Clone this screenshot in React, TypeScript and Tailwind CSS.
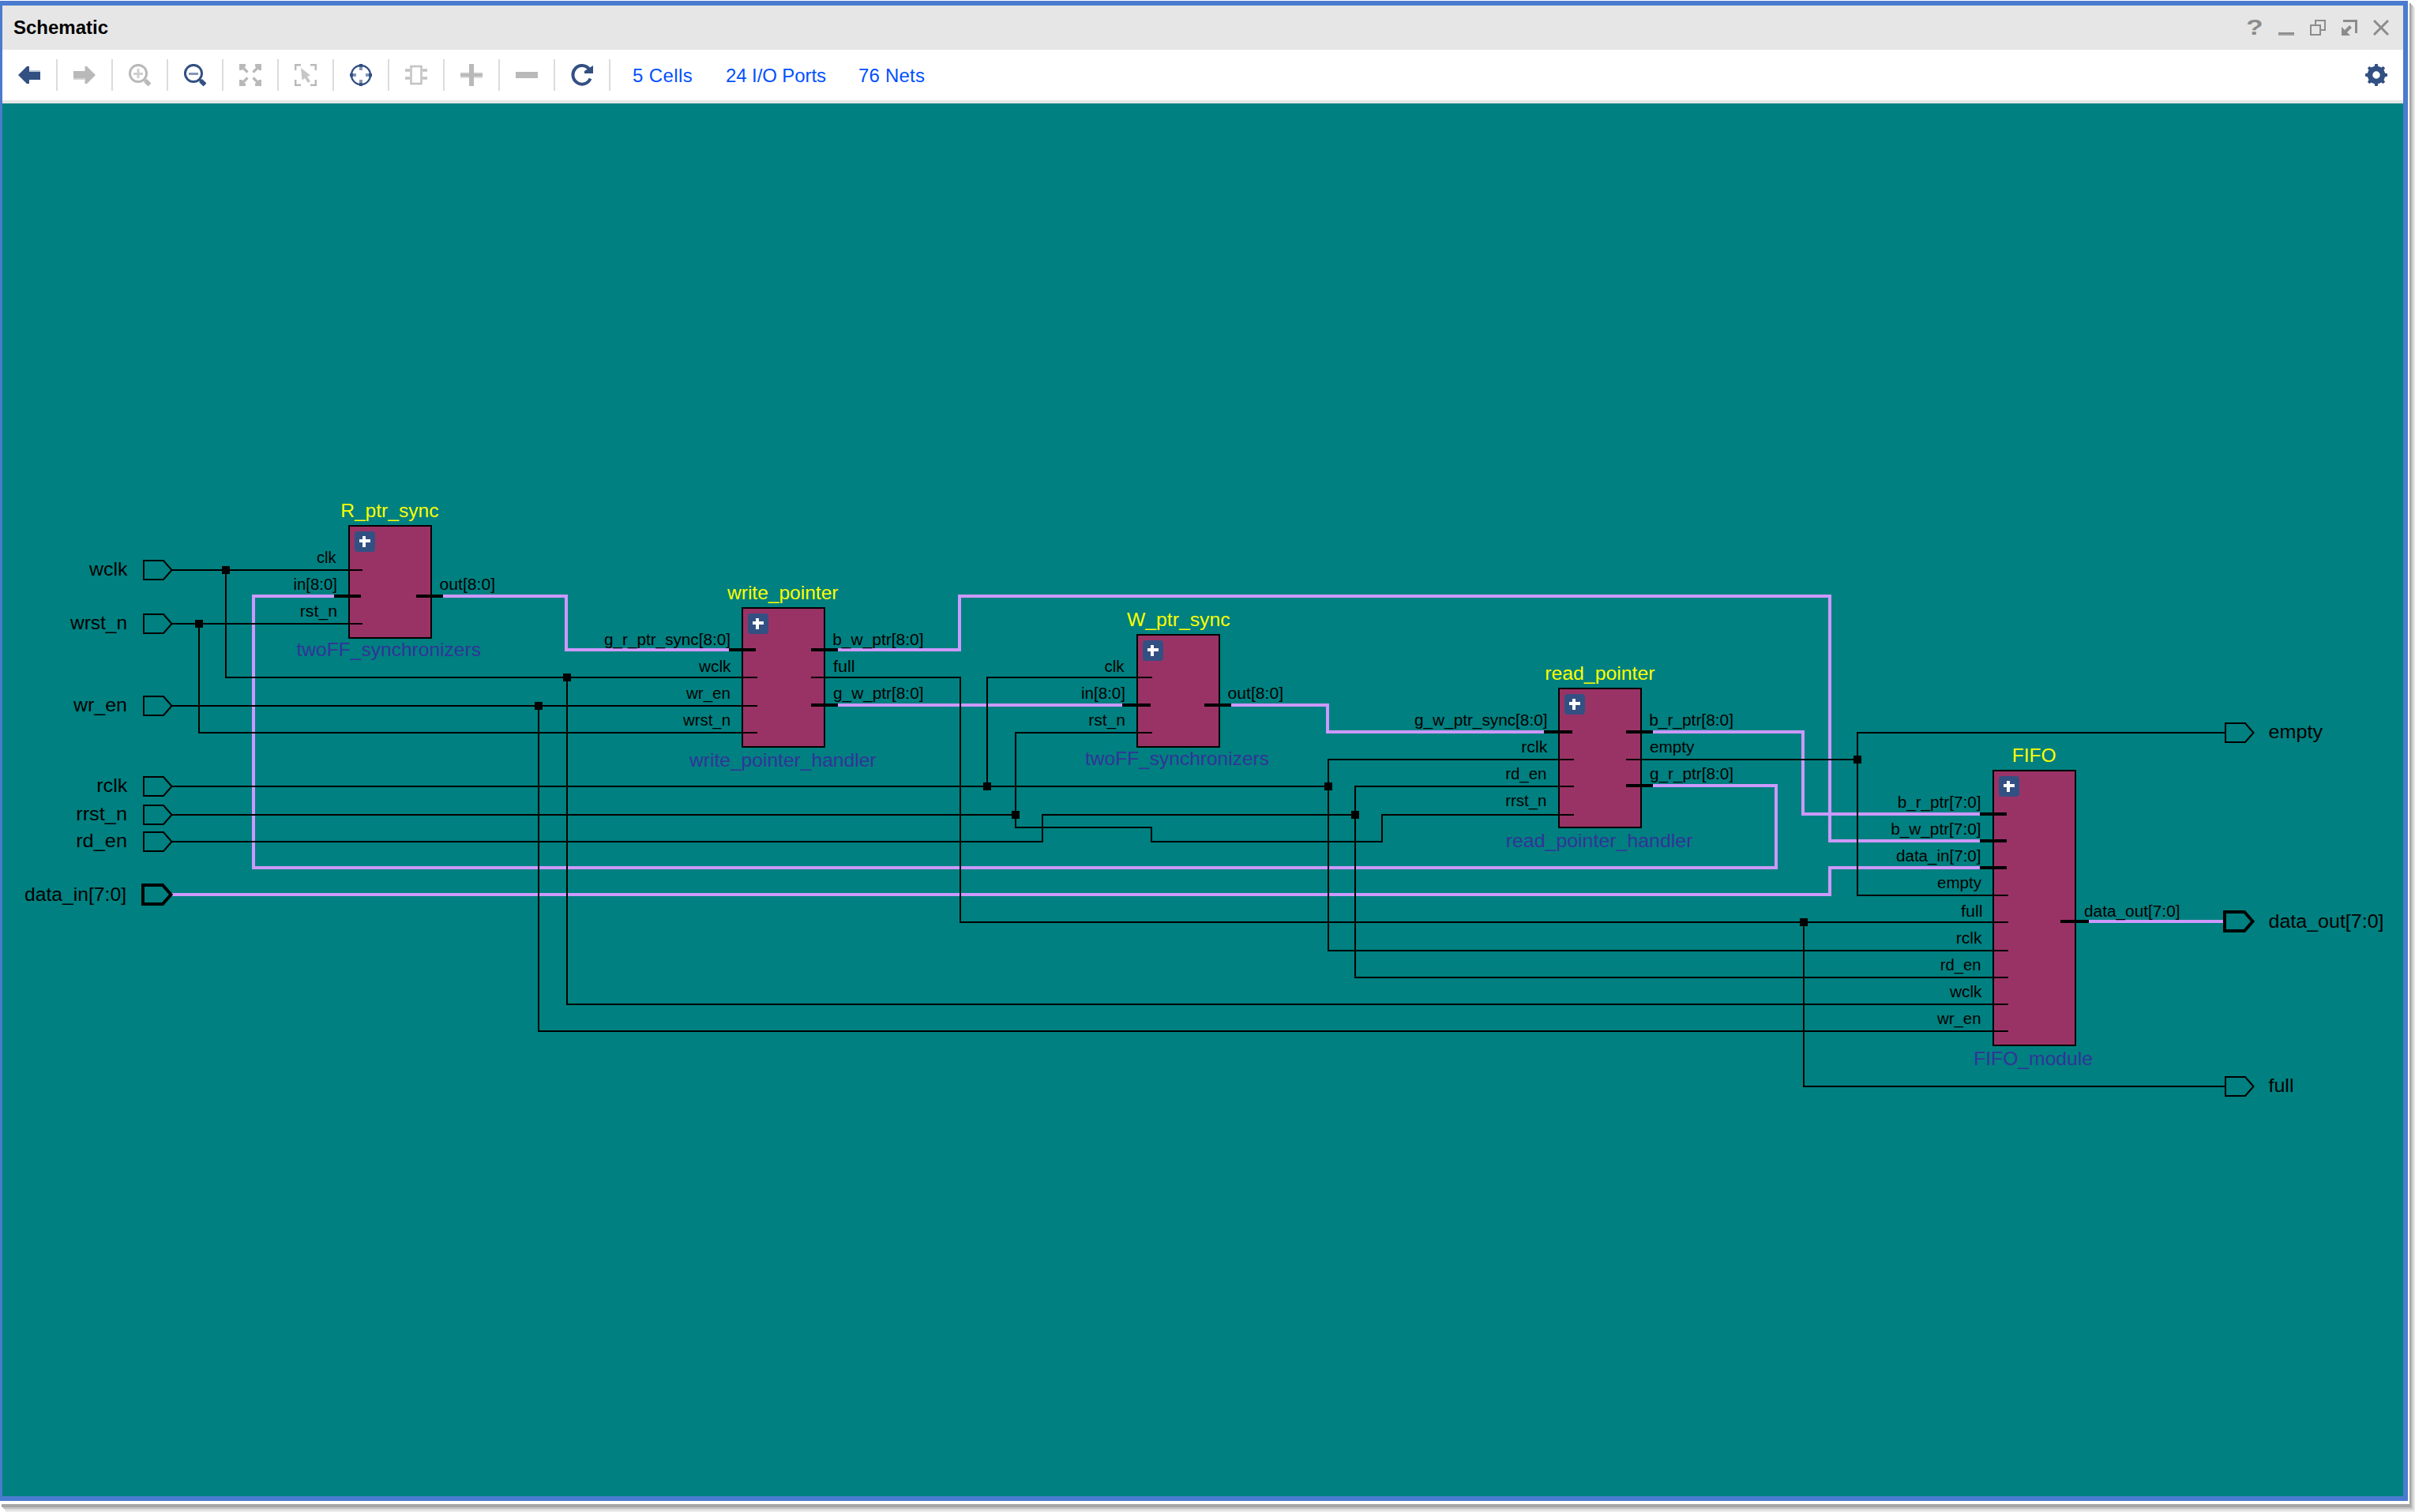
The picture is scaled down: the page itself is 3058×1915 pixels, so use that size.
import React from "react";

const FONT = "font-['Liberation_Sans',Arial,sans-serif]";
const BLUE = "#335083";
const GRAY = "#b9b9b9";

type Pt = [number, number];

/* ---------- toolbar icons, drawn on a 28px grid ---------- */

function Icon({ children }: { children: React.ReactNode }) {
  return (
    <svg width="28" height="28" viewBox="0 0 28 28" fill="none" className="block shrink-0">
      {children}
    </svg>
  );
}

const BackIcon = () => (
  <Icon>
    <path d="M0 14 L11 3 H14 V9 H28 V20 H14 V25 H11 Z" fill={BLUE} />
    <rect x="14" y="8" width="14" height="2" fill="#bcc6d8" />
  </Icon>
);

const ForwardIcon = () => (
  <Icon>
    <path d="M28 14 L17 3 H14.500 V9 H0 V18 H14.500 V25 H17 Z" fill={GRAY} />
    <rect x="0" y="18" width="15" height="2" fill="#d4d4d4" />
  </Icon>
);

const ZoomIcon = ({ color, soft, plus }: { color: string; soft: string; plus?: boolean }) => (
  <Icon>
    <circle cx="12" cy="12" r="10.6" stroke={color} strokeWidth="3" />
    <path d="M19 19 L22 22" stroke={color} strokeWidth="3" />
    <path d="M21 21 L26.500 26.500" stroke={color} strokeWidth="5.500" />
    <path d="M6 12.500 H18" stroke={soft} strokeWidth="3" />
    {plus && <path d="M12 6 V18" stroke={soft} strokeWidth="3" />}
  </Icon>
);

const FitIcon = () => (
  <Icon>
    <path d="M0 0 H8 V3 L3 8 H0 Z M28 0 V8 H25 L20 3 V0 Z M0 28 V20 H3 L8 25 V28 Z M28 28 H20 V25 L25 20 H28 Z" fill={GRAY} />
    <path d="M4 4 L10.500 10.500 M24 4 L17.500 10.500 M4 24 L10.500 17.500 M24 24 L17.500 17.500" stroke={GRAY} strokeWidth="3.200" />
  </Icon>
);

const SelectAreaIcon = () => (
  <Icon>
    <path d="M1.200 8 V1.200 H8 M20 1.200 H26.800 V8 M1.200 20 V26.800 H8 M20 26.800 H26.800 V20" stroke={GRAY} strokeWidth="2.400" />
    <path d="M8 5 L20 14.500 L16 16 L20 22 L17 24 L13 18 L9.500 20.500 Z" fill="#c6c6c6" />
  </Icon>
);

const TargetIcon = () => (
  <Icon>
    <circle cx="14" cy="14" r="12" stroke={BLUE} strokeWidth="2.400" />
    <path d="M14 1 V8 M14 20 V27 M1 14 H8 M20 14 H27" stroke="#8496b8" strokeWidth="4" />
    <path d="M14 0 V4 M14 24 V28 M0 14 H4 M24 14 H28" stroke={BLUE} strokeWidth="4" />
  </Icon>
);

const ChipIcon = () => (
  <Icon>
    <rect x="7.500" y="3" width="13" height="22" stroke="#c4c4c4" strokeWidth="2.600" />
    <path d="M0 8 H6 M0 18 H6 M22 8 H28 M22 18 H28" stroke="#c2c2c2" strokeWidth="3.600" />
  </Icon>
);

const PlusIcon = () => (
  <Icon>
    <rect x="0" y="10.500" width="28" height="7.500" fill="#dedede" />
    <rect x="0" y="12" width="28" height="4" fill={GRAY} />
    <rect x="11" y="0" width="6" height="28" fill={GRAY} />
  </Icon>
);

const MinusIcon = () => (
  <Icon>
    <rect x="0" y="10" width="28" height="8" fill={GRAY} />
  </Icon>
);

const RefreshIcon = () => (
  <Icon>
    <path d="M24.500 18.500 A11.500 11.800 0 1 1 23 6.500" stroke={BLUE} strokeWidth="4" />
    <path d="M28 2 V12 H17 V9 Z" fill={BLUE} />
  </Icon>
);

const GearIcon = () => (
  <Icon>
    <circle cx="14" cy="14" r="8" stroke={BLUE} strokeWidth="6.500" />
    {[0, 45, 90, 135].map((a) => (
      <g key={a} transform={`rotate(${a} 14 14)`}>
        <path d="M11.300 5 L12.300 0 H15.700 L16.700 5 Z M11.300 23 L12.300 28 H15.700 L16.700 23 Z" fill={BLUE} />
      </g>
    ))}
  </Icon>
);

/* ---------- title bar ---------- */

function TitleBar() {
  return (
    <div className="flex h-[56px] shrink-0 items-center justify-between bg-[#e6e6e6] pl-[14px] pr-[18px]">
      <span className="text-[24px] leading-[28px] font-bold text-black">Schematic</span>
      <div className="flex items-center gap-5 text-[#8c8c8c]">
        <span className="block w-5 scale-x-125 text-center text-[28px] leading-5 font-bold">?</span>
        <svg width="20" height="20" className="block">
          <rect x="0" y="16" width="20" height="4" fill="#a2a2a2" />
          <rect x="0" y="16" width="20" height="2" fill="#8c8c8c" />
        </svg>
        <svg width="20" height="20" fill="none" stroke="currentColor" strokeWidth="2" className="block">
          <rect x="1" y="7" width="12" height="12" />
          <path d="M7 7 V1 H19 V13 H13" />
        </svg>
        <svg width="20" height="20" fill="none" stroke="currentColor" className="block">
          <path d="M2 1.500 H18.500 V17" strokeWidth="3" />
          <path d="M4 16 L11.500 8.500" strokeWidth="4" />
          <path d="M0 9 V20 H11 Z" fill="currentColor" stroke="none" />
        </svg>
        <svg width="20" height="20" fill="none" stroke="currentColor" strokeWidth="3" className="block">
          <path d="M1 1 L19 19 M19 1 L1 19" />
        </svg>
      </div>
    </div>
  );
}

/* ---------- toolbar ---------- */

const tools = [
  BackIcon,
  ForwardIcon,
  () => <ZoomIcon color={GRAY} soft="#cfcfcf" plus />,
  () => <ZoomIcon color={BLUE} soft="#8496b8" />,
  FitIcon,
  SelectAreaIcon,
  TargetIcon,
  ChipIcon,
  PlusIcon,
  MinusIcon,
  RefreshIcon,
];

function Toolbar() {
  return (
    <div className="flex h-[68px] shrink-0 items-center justify-between border-b-4 border-[#e6e6e6] bg-white pr-5">
      <div className="flex items-center">
        {tools.map((Tool, i) => (
          <div key={i} className="flex h-10 w-[70px] items-center justify-center border-r-2 border-[#dcdcdc]">
            <Tool />
          </div>
        ))}
        <div className="flex gap-[40px] pt-[2px] pl-[28px] text-[24px] leading-[28px] whitespace-nowrap text-[#0050ff]">
          <span className="w-[78px] tracking-[0.4px]">5 Cells</span>
          <span className="w-[128px] tracking-[-0.100px]">24 I/O Ports</span>
          <span className="w-[90px] tracking-[0.2px]">76 Nets</span>
        </div>
      </div>
      <GearIcon />
    </div>
  );
}

/* ---------- schematic ---------- */

interface Label {
  t: string;
  x1: number;
  x2: number;
  y: number;
}

const L = (t: string, x1: number, x2: number, y: number): Label => ({ t, x1, x2, y });

const buses: Pt[][] = [
  [[423, 755], [321, 755], [321, 1099], [2249, 1099], [2249, 995], [2093, 995]],
  [[561, 755], [717, 755], [717, 823], [923, 823]],
  [[1061, 823], [1215, 823], [1215, 755], [2317, 755], [2317, 1065], [2507, 1065]],
  [[1061, 893], [1421, 893]],
  [[1559, 893], [1681, 893], [1681, 927], [1955, 927]],
  [[2093, 927], [2283, 927], [2283, 1031], [2507, 1031]],
  [[216, 1133], [2317, 1133], [2317, 1099], [2507, 1099]],
  [[2645, 1167], [2817, 1167]],
];

const wires: Pt[][] = [
  [[218, 722], [459, 722]],
  [[286, 722], [286, 858], [959, 858]],
  [[218, 790], [459, 790]],
  [[252, 790], [252, 928], [959, 928]],
  [[218, 894], [959, 894]],
  [[718, 858], [718, 1272], [2543, 1272]],
  [[682, 894], [682, 1306], [2543, 1306]],
  [[218, 996], [1682, 996]],
  [[1459, 858], [1250, 858], [1250, 996]],
  [[1993, 962], [1682, 962], [1682, 1204], [2543, 1204]],
  [[218, 1032], [1286, 1032]],
  [[1459, 928], [1286, 928], [1286, 1048], [1458, 1048], [1458, 1066], [1750, 1066], [1750, 1032], [1993, 1032]],
  [[218, 1066], [1320, 1066], [1320, 1032], [1716, 1032]],
  [[1993, 996], [1716, 996], [1716, 1238], [2543, 1238]],
  [[1027, 858], [1216, 858], [1216, 1168], [2543, 1168]],
  [[2059, 962], [2352, 962]],
  [[2817, 928], [2352, 928], [2352, 1134], [2543, 1134]],
  [[2284, 1168], [2284, 1376], [2817, 1376]],
];

const junctions: Pt[] = [
  [286, 722], [252, 790], [718, 858], [682, 894], [1250, 996], [1286, 1032],
  [1682, 996], [1716, 1032], [2352, 962], [2284, 1168],
];

const blocks = [
  { x: 441, y: 665, h: 144 },
  { x: 939, y: 769, h: 178 },
  { x: 1439, y: 803, h: 144 },
  { x: 1973, y: 871, h: 178 },
  { x: 2523, y: 975, h: 350 },
];

const stubs: [number, number, number][] = [
  [423, 457, 755], [527, 561, 755],
  [923, 957, 823], [1027, 1061, 823], [1027, 1061, 893],
  [1421, 1457, 893], [1525, 1559, 893],
  [1955, 1991, 927], [2059, 2093, 927], [2059, 2093, 995],
  [2507, 2541, 1031], [2507, 2541, 1065], [2507, 2541, 1099], [2609, 2645, 1167],
];

const ports: [number, number, boolean][] = [
  [182, 722, false], [182, 790, false], [182, 894, false], [182, 996, false],
  [182, 1032, false], [182, 1066, false], [181, 1133, true],
  [2818, 928, false], [2817, 1167, true], [2818, 1376, false],
];

const names: Label[] = [
  L("R_ptr_sync", 432, 555, 655),
  L("write_pointer", 921, 1061, 759),
  L("W_ptr_sync", 1427, 1557, 793),
  L("read_pointer", 1957, 2095, 861),
  L("FIFO", 2548.5, 2603, 965),
];

const modules: Label[] = [
  L("twoFF_synchronizers", 375.5, 608.5, 831),
  L("write_pointer_handler", 873, 1109, 971),
  L("twoFF_synchronizers", 1374, 1606.5, 969),
  L("read_pointer_handler", 1907.5, 2143, 1073),
  L("FIFO_module", 2500, 2649.5, 1349),
];

const portLabels: Label[] = [
  L("wclk", 113, 161, 729),
  L("wrst_n", 89, 159.5, 797),
  L("wr_en", 93, 159.5, 901),
  L("rclk", 123, 161, 1003),
  L("rrst_n", 97, 159.5, 1039),
  L("rd_en", 97, 159.5, 1073),
  L("data_in[7:0]", 31, 158.5, 1141),
  L("empty", 2872.5, 2940.5, 935),
  L("data_out[7:0]", 2872.5, 3017, 1175),
  L("full", 2872.5, 2903, 1383),
];

const pinLabels: Label[] = [
  L("clk", 401, 425, 713),
  L("in[8:0]", 371.5, 425.5, 747),
  L("rst_n", 380.5, 425.5, 781),
  L("out[8:0]", 556.5, 625.5, 747),
  L("g_r_ptr_sync[8:0]", 765, 923.5, 817),
  L("wclk", 885, 925, 851),
  L("wr_en", 869, 923.5, 885),
  L("wrst_n", 865, 923.5, 919),
  L("b_w_ptr[8:0]", 1055, 1168, 817),
  L("full", 1055, 1081, 851),
  L("g_w_ptr[8:0]", 1055, 1168, 885),
  L("clk", 1398.5, 1423, 851),
  L("in[8:0]", 1369, 1423.5, 885),
  L("rst_n", 1379, 1423.5, 919),
  L("out[8:0]", 1554.5, 1623.5, 885),
  L("g_w_ptr_sync[8:0]", 1791, 1958, 919),
  L("rclk", 1927, 1959, 953),
  L("rd_en", 1907, 1957, 987),
  L("rrst_n", 1907, 1957, 1021),
  L("b_r_ptr[8:0]", 2089, 2193.5, 919),
  L("empty", 2089, 2145, 953),
  L("g_r_ptr[8:0]", 2089, 2193.5, 987),
  L("b_r_ptr[7:0]", 2403.5, 2507, 1023),
  L("b_w_ptr[7:0]", 2395, 2507, 1057),
  L("data_in[7:0]", 2401, 2507, 1091),
  L("empty", 2453, 2508.5, 1125),
  L("full", 2483, 2509, 1161),
  L("rclk", 2477.5, 2509, 1195),
  L("rd_en", 2457.5, 2507, 1229),
  L("wclk", 2469, 2509, 1263),
  L("wr_en", 2453, 2507, 1297),
  L("data_out[7:0]", 2639, 2759, 1161),
];

const poly = (p: Pt[]) => p.map((q) => q.join(",")).join(" ");

function Labels({ items, size, fill }: { items: Label[]; size: number; fill: string }) {
  return (
    <g fontSize={size} fill={fill}>
      {items.map((l, i) => {
        const lead = /^[RFbr]/.test(l.t) ? 0.8 : 0;
        const tail = /[\]nl]$/.test(l.t) ? 1.5 : 0.5;
        return (
          <text key={i} x={l.x1 - lead} y={l.y} textLength={l.x2 - l.x1 + lead + tail} lengthAdjust="spacingAndGlyphs">
            {l.t}
          </text>
        );
      })}
    </g>
  );
}

function Schematic() {
  return (
    <svg viewBox="3 131 3040 1764" className="block h-[1764px] w-[3040px] bg-[#008080]">
      {blocks.map((b) => (
        <rect key={b.x} x={b.x + 1} y={b.y + 1} width="104" height={b.h - 2} fill="#993366" stroke="#000" strokeWidth="2" />
      ))}
      <g fill="none" stroke="#cc99ff" strokeWidth="4">
        {buses.map((p, i) => (
          <polyline key={i} points={poly(p)} />
        ))}
      </g>
      <g fill="none" stroke="#000" strokeWidth="2">
        {wires.map((p, i) => (
          <polyline key={i} points={poly(p)} />
        ))}
      </g>
      {stubs.map(([a, b, y], i) => (
        <rect key={i} x={a} y={y - 2} width={b - a} height="4" fill="#000" />
      ))}
      {junctions.map(([x, y], i) => (
        <rect key={i} x={x - 5} y={y - 5} width="10" height="10" fill="#000" />
      ))}
      {ports.map(([x, y, wide], i) => (
        <path
          key={i}
          d={`M${x} ${y - 12} H${x + 25} L${x + 35.5} ${y} L${x + 25} ${y + 12} H${x} Z`}
          fill="#008080"
          stroke="#000"
          strokeWidth={wide ? 4 : 2}
        />
      ))}
      {blocks.map((b) => (
        <g key={b.x}>
          <rect x={b.x + 8} y={b.y + 8} width="26" height="26" rx="4" fill={BLUE} />
          <path d={`M${b.x + 14} ${b.y + 20} h14 M${b.x + 20} ${b.y + 14} v14`} stroke="#fff" strokeWidth="4" />
        </g>
      ))}
      <Labels items={names} size={24.5} fill="#ffff00" />
      <Labels items={modules} size={24.5} fill="#333399" />
      <Labels items={portLabels} size={24.5} fill="#000" />
      <Labels items={pinLabels} size={20} fill="#000" />
    </svg>
  );
}

export default function App() {
  return (
    <div className={`h-[1915px] w-[3058px] overflow-hidden bg-white ${FONT}`}>
      <div className="h-[1905px] w-[3051px] bg-white pt-px pr-[2px] pb-1 shadow-[2px_4px_0_#a6a6a6,4px_6px_0_#c2c2c2,6px_8px_0_#dcdcdc,7px_10px_0_#ececec]">
        <div className="flex h-full flex-col border-t-[6px] border-r-[6px] border-b-[6px] border-l-[3px] border-[#4a7bcf]">
          <TitleBar />
          <Toolbar />
          <Schematic />
        </div>
      </div>
    </div>
  );
}
